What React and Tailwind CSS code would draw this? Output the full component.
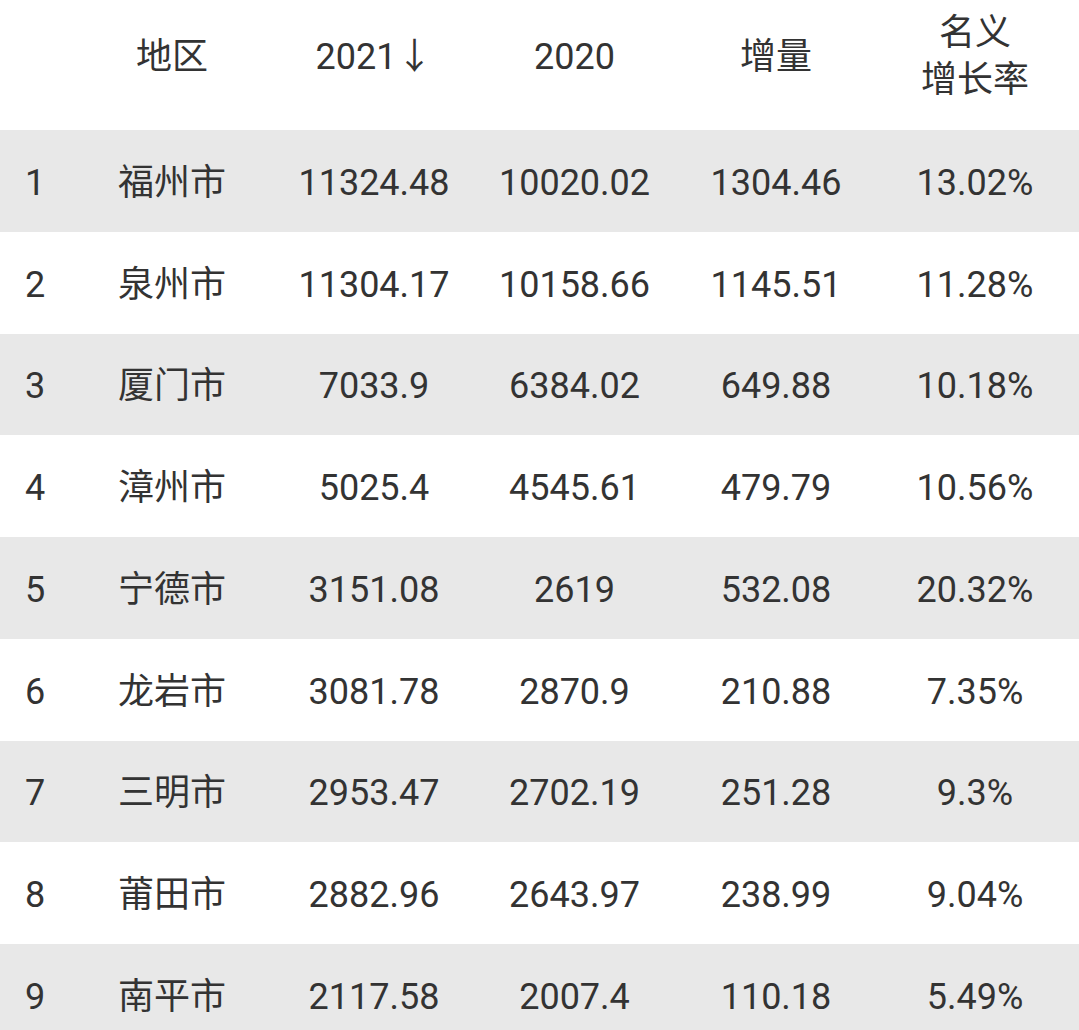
import React from 'react';

const rows = [
  ['1', '福州市', '11324.48', '10020.02', '1304.46', '13.02%'],
  ['2', '泉州市', '11304.17', '10158.66', '1145.51', '11.28%'],
  ['3', '厦门市', '7033.9', '6384.02', '649.88', '10.18%'],
  ['4', '漳州市', '5025.4', '4545.61', '479.79', '10.56%'],
  ['5', '宁德市', '3151.08', '2619', '532.08', '20.32%'],
  ['6', '龙岩市', '3081.78', '2870.9', '210.88', '7.35%'],
  ['7', '三明市', '2953.47', '2702.19', '251.28', '9.3%'],
  ['8', '莆田市', '2882.96', '2643.97', '238.99', '9.04%'],
  ['9', '南平市', '2117.58', '2007.4', '110.18', '5.49%'],
];

const cols = 'grid grid-cols-[70px_204px_200px_201px_202px_1fr] items-center';

export default function App() {
  return (
    <div
      className="w-[1079px] h-[1030px] overflow-hidden bg-white text-[#333333] text-[36px]"
      style={{ fontFamily: 'Roboto, "Noto Sans CJK SC", sans-serif' }}
    >
      <div className={`${cols} h-[130px] pb-[16px] text-center leading-[47px]`}>
        <div />
        <div>地区</div>
        <div>2021↓</div>
        <div>2020</div>
        <div>增量</div>
        <div className="pr-[6px]">名义<br />增长率</div>
      </div>
      {rows.map((r, i) => (
        <div
          key={r[0]}
          className={`${cols} h-[101.75px] pt-[4px] text-center ${i % 2 === 0 ? 'bg-[#e8e8e8]' : 'bg-white'}`}
        >
          {r.map((cell, j) => (
            <div key={j} className={j === 5 ? 'pr-[6px]' : ''}>{cell}</div>
          ))}
        </div>
      ))}
    </div>
  );
}
